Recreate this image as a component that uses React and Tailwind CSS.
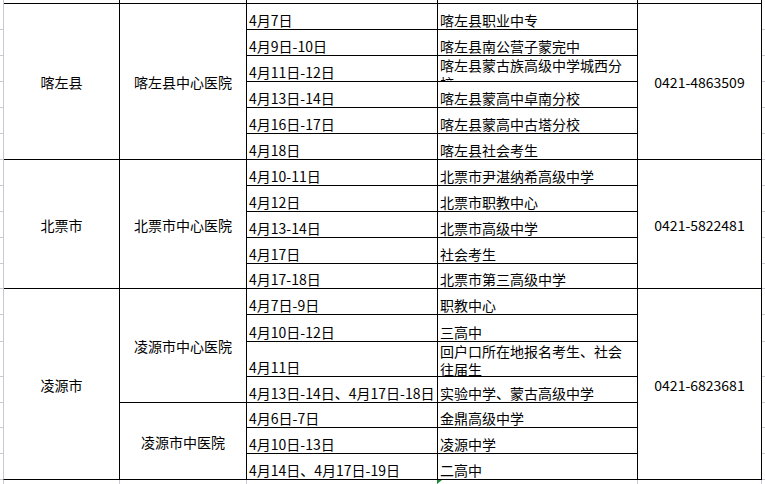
const rowHeights = [3, 25, 25, 25, 25, 25, 25, 25, 25, 25, 25, 24, 25, 26, 34, 25, 24, 25, 25];

const regions = [
  {
    county: '喀左县',
    phone: '0421-4863509',
    span: 'row-span-6',
    hospitals: [
      {
        name: '喀左县中心医院',
        span: 'row-span-6',
        rows: [
          ['4月7日', '喀左县职业中专'],
          ['4月9日-10日', '喀左县南公营子蒙完中'],
          ['4月11日-12日', ['喀左县蒙古族高级中学城西分', '校'], 'tight'],
          ['4月13日-14日', '喀左县蒙高中卓南分校'],
          ['4月16日-17日', '喀左县蒙高中古塔分校'],
          ['4月18日', '喀左县社会考生'],
        ],
      },
    ],
  },
  {
    county: '北票市',
    phone: '0421-5822481',
    span: 'row-span-5',
    hospitals: [
      {
        name: '北票市中心医院',
        span: 'row-span-5',
        rows: [
          ['4月10-11日', '北票市尹湛纳希高级中学'],
          ['4月12日', '北票市职教中心'],
          ['4月13-14日', '北票市高级中学'],
          ['4月17日', '社会考生'],
          ['4月17-18日', '北票市第三高级中学'],
        ],
      },
    ],
  },
  {
    county: '凌源市',
    phone: '0421-6823681',
    span: 'row-span-7',
    hospitals: [
      {
        name: '凌源市中心医院',
        span: 'row-span-4',
        rows: [
          ['4月7日-9日', '职教中心'],
          ['4月10日-12日', '三高中'],
          ['4月11日', ['回户口所在地报名考生、社会', '往届生'], 'wrap'],
          ['4月13日-14日、4月17日-18日', '实验中学、蒙古高级中学'],
        ],
      },
      {
        name: '凌源市中医院',
        span: 'row-span-3',
        rows: [
          ['4月6日-7日', '金鼎高级中学'],
          ['4月10日-13日', '凌源中学'],
          ['4月14日、4月17日-19日', '二高中'],
        ],
      },
    ],
  },
];

const TextCell = ({ text, mode }) => {
  if (mode === 'tight') {
    return (
      <div className="bg-white overflow-hidden pl-[2px] leading-[18px] whitespace-nowrap">
        {text[0]}
        <br />
        {text[1]}
      </div>
    );
  }
  if (mode === 'wrap') {
    return (
      <div className="bg-white overflow-hidden pl-[2px] leading-[18px] whitespace-nowrap">
        {text[0]}
        <br />
        {text[1]}
      </div>
    );
  }
  return (
    <div className="bg-white flex items-end overflow-hidden pl-[2px] pb-[1px] leading-[16px] whitespace-nowrap">
      {text}
    </div>
  );
};

const Strip = () => (
  <div className="flex flex-col w-[3px]">
    {rowHeights.map((h, i) => (
      <div key={i} className="flex flex-col">
        <div style={{ height: h }} />
        <div className={`h-px ${i === 0 ? '' : 'bg-[#c9c9d6]'}`} />
      </div>
    ))}
  </div>
);

const App = () => {
  const cells = [];
  for (let i = 0; i < 5; i++) cells.push(<div key={`top-${i}`} className="bg-white" />);

  regions.forEach((region) => {
    region.hospitals.forEach((hospital, hi) => {
      hospital.rows.forEach(([date, school, mode], ri) => {
        if (hi === 0 && ri === 0) {
          cells.push(
            <div key={`${region.county}-c`} className={`${region.span} bg-white flex items-center justify-center pt-[2px]`}>
              {region.county}
            </div>
          );
        }
        if (ri === 0) {
          cells.push(
            <div key={`${hospital.name}-h`} className={`${hospital.span} bg-white flex items-center justify-center pt-[2px]`}>
              {hospital.name}
            </div>
          );
        }
        cells.push(<TextCell key={`${hospital.name}-${ri}-d`} text={date} />);
        cells.push(<TextCell key={`${hospital.name}-${ri}-s`} text={school} mode={mode} />);
        if (hi === 0 && ri === 0) {
          cells.push(
            <div key={`${region.county}-p`} className={`${region.span} bg-white flex items-center justify-center pt-[2px]`}>
              {region.phone}
            </div>
          );
        }
      });
    });
  });

  return (
    <div className="w-[765px] h-[484px] bg-white overflow-hidden text-black text-[14px] font-['Noto_Sans_CJK_SC',sans-serif]">
      <div className="flex">
        <Strip />
        <div className="grid grid-cols-[115px_126px_190px_199px_123px] grid-rows-[3px_25px_25px_25px_25px_25px_25px_25px_25px_25px_25px_24px_25px_26px_34px_25px_24px_25px_25px] gap-px bg-black border-l border-l-[#c9c9d6] border-r border-r-black border-b border-b-black">
          {cells}
        </div>
        <Strip />
      </div>
      <div className="flex h-[4px]">
        <div className="w-[4px] border-r border-r-[#c9c9d6]" />
        <div className="w-[116px] border-r border-r-[#c9c9d6]" />
        <div className="w-[127px] border-r border-r-[#c9c9d6]" />
        <div className="w-[191px] border-r border-r-[#c9c9d6] relative">
          <svg className="absolute right-[-5px] top-0" width="5" height="4" viewBox="0 0 5 4">
            <polygon points="0,0 5,0 0,4" fill="#1e8a3c" />
          </svg>
        </div>
        <div className="w-[200px] border-r border-r-[#c9c9d6]" />
        <div className="w-[124px] border-r border-r-[#c9c9d6]" />
      </div>
    </div>
  );
};

export default App;
